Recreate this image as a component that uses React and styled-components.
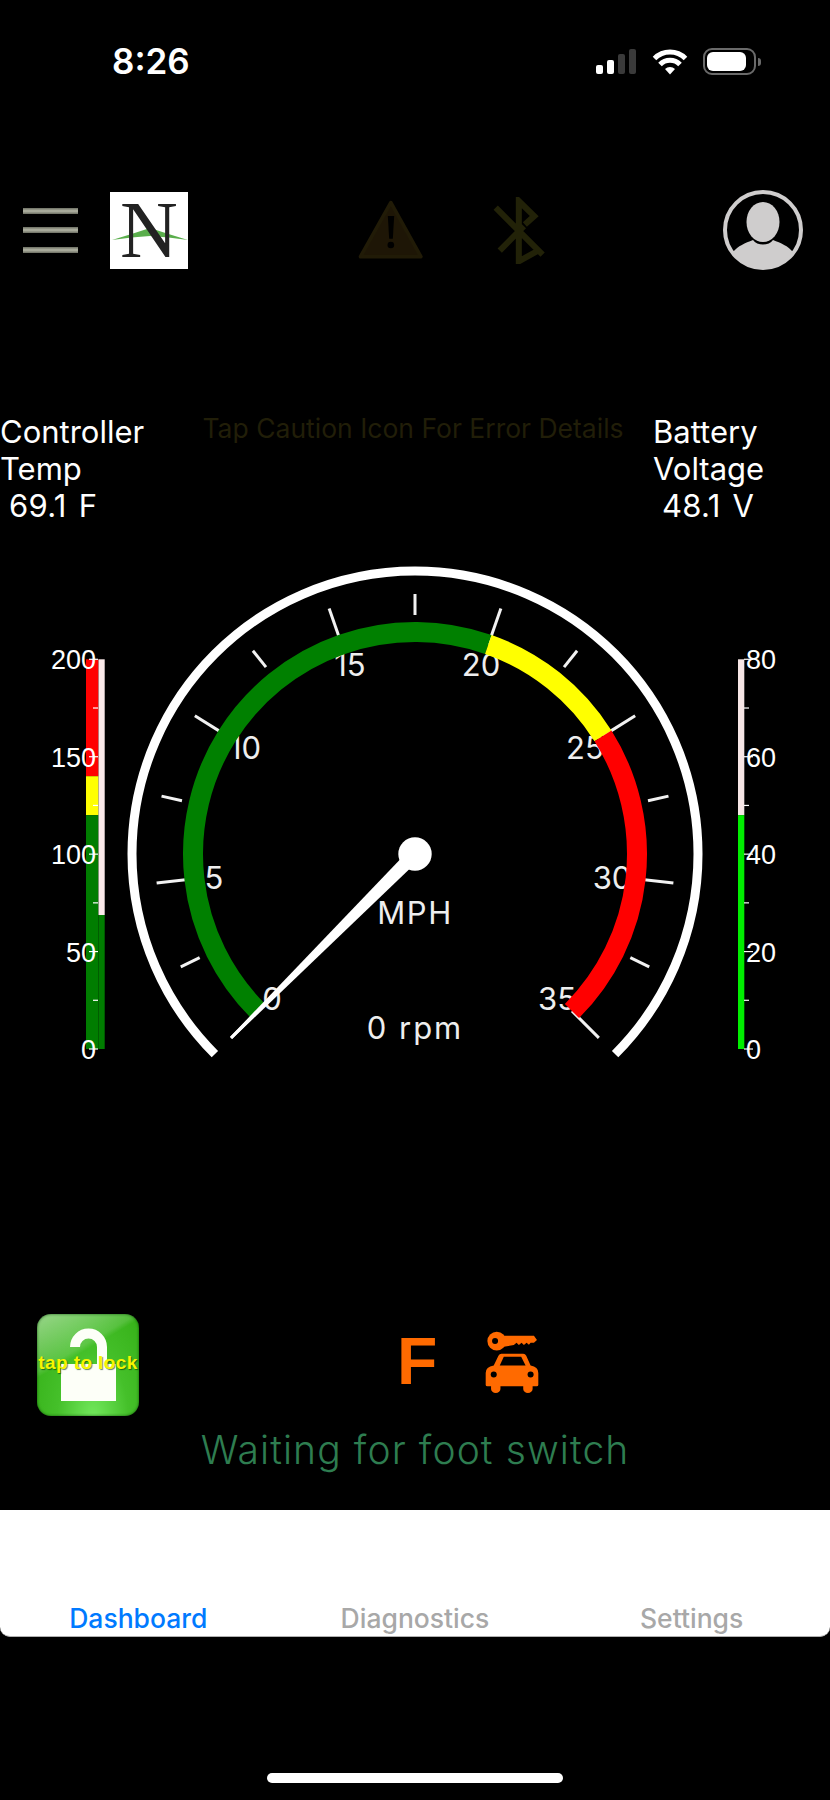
import React from 'react'
import styled, { createGlobalStyle } from 'styled-components'

const GlobalStyle = createGlobalStyle`
  html, body { margin: 0; padding: 0; background: #000; }
  body { font-family: "Inter", "Liberation Sans", sans-serif; }
`

const Page = styled.div`
  width: 830px;
  height: 1800px;
  background: #000;
  color: #fff;
  overflow: hidden;
`

/* status bar */
const StatusBar = styled.div`
  height: 100px;
  display: flex;
  align-items: flex-start;
  justify-content: space-between;
  padding: 48px 69px 0 112px;
  box-sizing: border-box;
`
const Clock = styled.div`
  font-size: 35px;
  font-weight: 600;
  line-height: 27px;
  letter-spacing: 0;
`
const StatusIcons = styled.div`
  display: flex;
  align-items: center;
  height: 27px;
`
const Signal = styled.div`
  display: flex;
  align-items: flex-end;
  gap: 4px;
  height: 25px;
  margin-right: 16px;
`
const SignalBar = styled.span`
  width: 7px;
  height: ${p => p.$h}px;
  border-radius: 2px;
  background: ${p => (p.$on ? '#fff' : '#3a3a3a')};
`
const Battery = styled.div`
  width: 53px;
  height: 27px;
  margin-left: 15px;
  box-sizing: border-box;
  border: 2px solid #6a6a6a;
  border-radius: 9px;
  padding: 2px 8px 2px 2px;
`
const BatteryFill = styled.div`
  height: 100%;
  background: #fff;
  border-radius: 6px;
`
const BatteryNub = styled.div`
  width: 3px;
  height: 8px;
  margin-left: 2px;
  background: #6a6a6a;
  border-radius: 0 3px 3px 0;
`

/* app header */
const Header = styled.div`
  height: 80px;
  margin-top: 90px;
  padding: 0 27px 0 23px;
  display: flex;
  align-items: center;
`
const Burger = styled.div`
  width: 55px;
  display: flex;
  flex-direction: column;
  gap: 13.5px;
`
const BurgerLine = styled.span`
  display: block;
  height: 6px;
  background: linear-gradient(#6c6e62, #b4b6a6 50%, #6c6e62);
`
const Logo = styled.svg`
  width: 78px;
  height: 77px;
  margin-left: 32px;
  background: #fff;
  overflow: visible;
`
const LogoLetter = styled.text`
  font-family: "Liberation Serif", serif;
  font-size: 80px;
  fill: #222;
`
const WarnIcon = styled.svg`
  width: 66px;
  height: 60px;
  margin-left: 170px;
`
const BtIcon = styled.svg`
  width: 52px;
  height: 67px;
  margin-left: 69px;
`
const Profile = styled.svg`
  width: 80px;
  height: 80px;
  margin-left: auto;
`

/* stats above the gauge */
const Stats = styled.div`
  margin-top: 143px;
  display: grid;
  grid-template-columns: 172px 1fr 176px;
  font-size: 31px;
  line-height: 37px;
`
const Stat = styled.div`
  margin-left: ${p => p.$left}px;
  white-space: nowrap;
`
const StatValue = styled.div`
  padding-left: ${p => p.$left}px;
  word-spacing: 3px;
  letter-spacing: 0.3px;
`
const Hint = styled.div`
  text-align: center;
  color: #211e08;
  font-size: 26.5px;
  white-space: nowrap;
  line-height: 31px;
`

/* gauges */
const GaugeRow = styled.div`
  margin-top: 36px;
  height: 510px;
  display: flex;
`
const BarSvg = styled.svg`
  width: 115px;
  height: 510px;
  flex: none;
`
const DialSvg = styled.svg`
  width: 600px;
  height: 510px;
  flex: none;
`
const BarLabel = styled.text`
  font-family: "Liberation Sans", sans-serif;
  font-size: 27px;
  fill: #fff;
`
const DialLabel = styled.text`
  font-family: "Inter", "Liberation Sans", sans-serif;
  font-size: ${p => p.$size || 31}px;
  fill: #eee;
  letter-spacing: ${p => p.$track || 0}px;
`

/* lock + indicators */
const Controls = styled.div`
  margin-top: 243px;
  height: 103px;
  padding-left: 37px;
  display: flex;
  align-items: center;
`
const LockButton = styled.div`
  width: 102px;
  height: 102px;
  border-radius: 14px;
  display: grid;
  place-items: center;
  background:
    linear-gradient(150deg, rgba(255, 255, 255, 0.5) 0%, rgba(255, 255, 255, 0.14) 36%, rgba(255, 255, 255, 0) 40%),
    radial-gradient(ellipse at 55% 105%, #74ea5e 0%, #45c02a 45%, #32ad14 100%);
  box-shadow: inset 0 0 3px rgba(0, 60, 0, 0.8);
  & > * { grid-area: 1 / 1; }
`
const LockIcon = styled.svg`
  width: 102px;
  height: 102px;
`
const LockText = styled.div`
  font-family: "Liberation Sans", sans-serif;
  font-size: 19px;
  font-weight: 700;
  letter-spacing: 0.4px;
  color: #f6f600;
  text-shadow: 1px 1px 1px rgba(0, 50, 0, 0.6);
  white-space: nowrap;
  margin-top: -4px;
`
const DriveLetter = styled.div`
  font-family: "Liberation Sans", sans-serif;
  font-size: 66px;
  font-weight: 700;
  line-height: 67px;
  color: #ff6a00;
  margin-left: 258px;
  margin-top: -6px;
`
const KeyCar = styled.svg`
  width: 54px;
  height: 62px;
  margin-left: 48px;
  margin-top: -6px;
`
const Waiting = styled.div`
  margin-top: 11px;
  height: 46px;
  line-height: 46px;
  text-align: center;
  color: #2e7d50;
  font-size: 39px;
  font-weight: 300;
  letter-spacing: 1.1px;
`

/* tab bar */
const TabBar = styled.div`
  margin-top: 37px;
  height: 127px;
  box-sizing: border-box;
  background: #fff;
  border-bottom: 1px solid #b0b0b0;
  border-radius: 0 0 10px 10px;
  display: grid;
  grid-template-columns: repeat(3, 1fr);
  align-items: end;
  padding-bottom: 1px;
`
const Tab = styled.div`
  text-align: center;
  font-size: 26.5px;
  font-weight: 500;
  line-height: 34px;
  color: ${p => (p.$active ? '#007aff' : '#a8a8a8')};
`
const HomeBar = styled.div`
  width: 296px;
  height: 10px;
  margin: 136px auto 0;
  background: #fff;
  border-radius: 5px;
`

const CX = 300
const CY = 294

const polar = (deg, r) => {
  const a = ((deg - 90) * Math.PI) / 180
  return [CX + r * Math.cos(a), CY + r * Math.sin(a)]
}
const arc = (from, to, r) => {
  const [x1, y1] = polar(from, r)
  const [x2, y2] = polar(to, r)
  return `M${x1} ${y1} A${r} ${r} 0 ${to - from > 180 ? 1 : 0} 1 ${x2} ${y2}`
}
const mphAngle = v => -135 + (v / 35) * 270

const dialLabels = [
  ['0', 157, 439],
  ['5', 99, 318],
  ['10', 130, 188],
  ['15', 235, 105],
  ['20', 366, 105],
  ['25', 470, 188],
  ['30', 497, 318],
  ['35', 442, 439],
]

const Dial = () => {
  const ticks = Array.from({ length: 15 }, (_, i) => i * 2.5)
  return (
    <DialSvg viewBox="0 0 600 510">
      <path d={arc(-135, 135, 283)} fill="none" stroke="#fff" strokeWidth="9" />
      {ticks.map(v => {
        const major = v % 5 === 0
        const [x1, y1] = polar(mphAngle(v), major ? 222 : 239)
        const [x2, y2] = polar(mphAngle(v), 260)
        return <line key={v} x1={x1} y1={y1} x2={x2} y2={y2} stroke="#f2f2f2" strokeWidth="3" />
      })}
      {dialLabels.map(([t, x, y]) => (
        <DialLabel key={t} x={x} y={y + 11} textAnchor="middle">{t}</DialLabel>
      ))}
      <path d={arc(mphAngle(0), mphAngle(20), 222)} fill="none" stroke="#008000" strokeWidth="20" />
      <path d={arc(mphAngle(20), mphAngle(25), 222)} fill="none" stroke="#ffff00" strokeWidth="20" />
      <path d={arc(mphAngle(25), mphAngle(35), 222)} fill="none" stroke="#ff0000" strokeWidth="20" />
      <DialLabel x={CX} y={364} textAnchor="middle" $size={31} $track={1.6}>MPH</DialLabel>
      <DialLabel x={CX} y={479} textAnchor="middle" $size={31} $track={2}>0 rpm</DialLabel>
      <polygon
        points={`${CX - 7 * 0.707} ${CY - 7 * 0.707} ${CX + 7 * 0.707} ${CY + 7 * 0.707} ${CX - 183} ${CY + 185} ${CX - 185} ${CY + 183}`}
        fill="#fff"
      />
      <circle cx={CX} cy={CY} r="16.7" fill="#fff" />
    </DialSvg>
  )
}

const TOP = 99.3
const BOTTOM = 489
const barY = f => BOTTOM - f * (BOTTOM - TOP)

const TempBar = () => (
  <BarSvg viewBox="0 0 115 510">
    <rect x="86" y={barY(1)} width="12.5" height={barY(0.7) - barY(1)} fill="#ff0000" />
    <rect x="86" y={barY(0.7)} width="12.5" height={barY(0.6) - barY(0.7)} fill="#ffff00" />
    <rect x="86" y={barY(0.6)} width="12.5" height={barY(0) - barY(0.6)} fill="#007d00" />
    <rect x="98.5" y={barY(1)} width="6.2" height={355 - barY(1)} fill="#fbeaea" />
    <rect x="98.5" y="355" width="6.2" height={BOTTOM - 355} fill="#007d00" />
    {[0, 1, 2, 3, 4, 5, 6, 7, 8].map(i => (
      <line key={i} x1={i % 2 ? 93 : 89} x2="98" y1={barY(i / 8)} y2={barY(i / 8)} stroke="#fff" strokeWidth="1.2" />
    ))}
    {[[0, '0'], [50, '50'], [100, '100'], [150, '150'], [200, '200']].map(([v, t]) => (
      <BarLabel key={v} x="96" y={barY(v / 200) + 10} textAnchor="end">{t}</BarLabel>
    ))}
  </BarSvg>
)

const VoltBar = () => (
  <BarSvg viewBox="0 0 115 510">
    <rect x="23" y={barY(1)} width="6.3" height={barY(0.6) - barY(1)} fill="#f6e6e6" />
    <rect x="23" y={barY(0.6)} width="6.3" height={barY(0) - barY(0.6)} fill="#00ee00" />
    {[0, 1, 2, 3, 4, 5, 6, 7, 8].map(i => (
      <line key={i} x1="29" x2={i % 2 ? 34 : 38} y1={barY(i / 8)} y2={barY(i / 8)} stroke="#fff" strokeWidth="1.2" />
    ))}
    {[[0, '0'], [20, '20'], [40, '40'], [60, '60'], [80, '80']].map(([v, t]) => (
      <BarLabel key={v} x="31" y={barY(v / 80) + 10}>{t}</BarLabel>
    ))}
  </BarSvg>
)

export default function App() {
  return (
    <Page>
      <GlobalStyle />
      <StatusBar>
        <Clock>8:26</Clock>
        <StatusIcons>
          <Signal>
            <SignalBar $h={9} $on />
            <SignalBar $h={14} $on />
            <SignalBar $h={20} />
            <SignalBar $h={25} />
          </Signal>
          <svg width="36" height="26" viewBox="0 0 36 26">
            <path d="M2.5 9.5 A22 22 0 0 1 33.5 9.5" fill="none" stroke="#fff" strokeWidth="5" />
            <path d="M8 15.5 A14 14 0 0 1 28 15.5" fill="none" stroke="#fff" strokeWidth="5" />
            <path d="M13 20 L18 25.5 L23 20 A7.5 7.5 0 0 0 13 20 Z" fill="#fff" />
          </svg>
          <Battery><BatteryFill /></Battery>
          <BatteryNub />
        </StatusIcons>
      </StatusBar>

      <Header>
        <Burger>
          <BurgerLine />
          <BurgerLine />
          <BurgerLine />
        </Burger>
        <Logo viewBox="0 0 78 77">
          <path d="M2 48 Q22 42 40 36 Q58 42 78 48 Q58 45 40 44 Q22 45 2 48 Z" fill="#5aae4c" />
          <LogoLetter x="39" y="65" textAnchor="middle">N</LogoLetter>
        </Logo>
        <WarnIcon viewBox="55 62 197 180">
          <polygon points="153,70 243,232 62,232" fill="#1e1606" stroke="#211b07" strokeWidth="11" strokeLinejoin="round" />
          <polygon points="144,110 163,110 159,178 148,178" fill="#000" />
          <circle cx="153" cy="197" r="10" fill="#000" />
        </WarnIcon>
        <BtIcon viewBox="460 48 155 200">
          <path
            d="M468 80 L608 220 M480 208 L552 135 M555 130 L583 105 L537 60 V240 L600 205"
            fill="none"
            stroke="#222208"
            strokeWidth="18"
          />
        </BtIcon>
        <Profile viewBox="0 0 80 80">
          <circle cx="40" cy="40" r="38" fill="none" stroke="#cfcdcd" strokeWidth="4" />
          <ellipse cx="40" cy="32" rx="16.5" ry="20" fill="#cfcdcd" />
          <path d="M10 62 C15 56 22 53 30 50 C34 56 46 56 50 50 C58 53 65 56 70 62 A37 37 0 0 1 10 62 Z" fill="#cfcdcd" />
        </Profile>
      </Header>

      <Stats>
        <Stat $left={0}>
          Controller<br />Temp
          <StatValue $left={9}>69.1 F</StatValue>
        </Stat>
        <Hint>Tap Caution Icon For Error Details</Hint>
        <Stat $left={-1}>
          Battery<br />Voltage
          <StatValue $left={9}>48.1 V</StatValue>
        </Stat>
      </Stats>

      <GaugeRow>
        <TempBar />
        <Dial />
        <VoltBar />
      </GaugeRow>

      <Controls>
        <LockButton>
          <LockIcon viewBox="0 0 102 102">
            <rect x="24" y="50" width="55" height="37" fill="#fdfff8" />
            <path d="M38 33 A13.5 13.5 0 0 1 65 33 V52" fill="none" stroke="#fdfff8" strokeWidth="10" />
          </LockIcon>
          <LockText>tap to lock</LockText>
        </LockButton>
        <DriveLetter>F</DriveLetter>
        <KeyCar viewBox="318 65 157 185">
          <g fill="#ff6a00">
            <circle cx="351" cy="95" r="28" />
            <polygon points="372,79 462,79 471,92 462,100 452,100 447,106 440,100 432,107 425,100 417,107 410,100 402,107 372,112" />
            <path d="M365 133 H430 Q436 133 439 139 L452 168 Q475 172 475 190 V226 Q475 230 470 230 H458 V238 A14 12 0 0 1 430 238 V230 H362 V238 A14 12 0 0 1 334 238 V230 H323 Q318 230 318 226 V190 Q318 172 342 168 L356 139 Q359 133 365 133 Z" />
          </g>
          <g fill="#000">
            <circle cx="346" cy="95" r="9" />
            <polygon points="360,168 372,142 424,142 437,168" />
            <circle cx="342" cy="195" r="9" />
            <circle cx="452" cy="195" r="9" />
          </g>
        </KeyCar>
      </Controls>

      <Waiting>Waiting for foot switch</Waiting>

      <TabBar>
        <Tab $active>Dashboard</Tab>
        <Tab>Diagnostics</Tab>
        <Tab>Settings</Tab>
      </TabBar>
      <HomeBar />
    </Page>
  )
}
